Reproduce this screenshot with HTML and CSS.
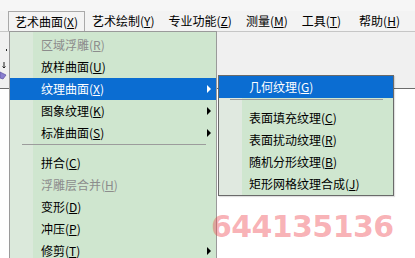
FILE: index.html
```html
<!DOCTYPE html>
<html>
<head>
<meta charset="utf-8">
<link rel="stylesheet" href="styles.css">
</head>
<body>
<div class="app">
  <div class="titlegap"></div>
  <div class="menubar">
    <div class="mb-item pressed">艺术曲面(<u>X</u>)</div>
    <div class="mb-item">艺术绘制(<u>Y</u>)</div>
    <div class="mb-item">专业功能(<u>Z</u>)</div>
    <div class="mb-item">测量(<u>M</u>)</div>
    <div class="mb-item">工具(<u>T</u>)</div>
    <div class="mb-item">帮助(<u>H</u>)</div>
  </div>
  <div class="toolbar">
    <svg class="tb-icons" width="8" height="56" viewBox="0 0 8 56">
      <rect x="6" y="17" width="1" height="2" fill="#222"/>
      <path d="M4 30 L4 36 M2.5 34.5 L4 36 L5.5 34.5" stroke="#222" stroke-width="1" fill="none"/>
      <path d="M0 40 L6 43 L3 47 L0 46 Z" fill="#8a7fd0" stroke="#5a4fa0" stroke-width="0.7"/>
    </svg>
  </div>
  <div class="canvas"></div>

  <div class="menu main-menu">
    <div class="row disabled">区域浮雕(<u>R</u>)</div>
    <div class="row">放样曲面(<u>U</u>)</div>
    <div class="row active sub">纹理曲面(<u>X</u>)</div>
    <div class="row sub">图象纹理(<u>K</u>)</div>
    <div class="row sub">标准曲面(<u>S</u>)</div>
    <div class="sep"></div>
    <div class="row">拼合(<u>C</u>)</div>
    <div class="row disabled">浮雕层合并(<u>H</u>)</div>
    <div class="row">变形(<u>D</u>)</div>
    <div class="row">冲压(<u>P</u>)</div>
    <div class="row sub">修剪(<u>T</u>)</div>
  </div>

  <div class="menu sub-menu">
    <div class="row active">几何纹理(<u>G</u>)</div>
    <div class="sep"></div>
    <div class="row">表面填充纹理(<u>C</u>)</div>
    <div class="row">表面扰动纹理(<u>R</u>)</div>
    <div class="row">随机分形纹理(<u>B</u>)</div>
    <div class="row">矩形网格纹理合成(<u>J</u>)</div>
  </div>

  <div class="watermark">644135136</div>
</div>
</body>
</html>
```
FILE: styles.css
```css
html, body {
  margin: 0;
  padding: 0;
}
body {
  width: 415px;
  height: 258px;
  overflow: hidden;
  background: #ffffff;
  font-family: "Noto Sans CJK SC", "Noto Sans", sans-serif;
  font-size: 12px;
  color: #000;
}
.app {
  position: relative;
  width: 415px;
  height: 258px;
  display: flex;
  flex-direction: column;
}
u {
  text-decoration: underline;
  text-underline-offset: 1px;
}
.titlegap {
  height: 11px;
  background: #f6f6f6;
}
.menubar {
  display: flex;
  height: 20px;
  padding-left: 8px;
  background: #f3f3f3;
  border-bottom: 1px solid #c6c6c6;
}
.mb-item {
  padding: 0 7px;
  line-height: 20px;
  white-space: nowrap;
}
.mb-item:last-child {
  padding-left: 11px;
}
.mb-item.pressed {
  border: 1px solid #a9a9a9;
  border-bottom: none;
  padding: 0 6px;
  line-height: 19px;
}
.toolbar {
  height: 56px;
  background: #f0f0f0;
  border-bottom: 1px solid #6c6c6c;
  display: flex;
}
.tb-icons {
  display: block;
}
.canvas {
  flex: 1;
  background: #ffffff;
}
.menu {
  position: absolute;
  background: #cfe6cf;
  box-sizing: border-box;
}
.main-menu {
  left: 9px;
  top: 31px;
  width: 208px;
  padding: 2px 0;
  border: 1px solid #9a9a9a;
  background: linear-gradient(to right, #dbe9db 0, #dbe9db 23px, #cfe6cf 23px);
}
.sub-menu {
  left: 218px;
  top: 75px;
  width: 176px;
  border: 1px solid #6a6a6a;
  background: linear-gradient(to right, #e0e9e0 0, #e0e9e0 23px, #cfe6cf 23px);
  box-shadow: 1px 1px 1px rgba(0,0,0,0.12);
}
.row {
  position: relative;
  height: 22px;
  line-height: 22px;
  white-space: nowrap;
}
.main-menu .row {
  padding-left: 31px;
}
.sub-menu .row {
  padding-left: 30px;
}
.row.disabled {
  color: #8c8c8c;
}
.row.active {
  background: #0b6dd2;
  color: #ffffff;
}
.row.sub::after {
  content: "";
  position: absolute;
  right: 5px;
  top: 7px;
  border-left: 4px solid #000;
  border-top: 4px solid transparent;
  border-bottom: 4px solid transparent;
}
.row.active.sub::after {
  border-left-color: #ffffff;
}
.sep {
  height: 8px;
  box-sizing: border-box;
}
.sep::before {
  content: "";
  display: block;
  height: 1px;
  background: #9c9c9c;
}
.main-menu .sep {
  margin: 0 10px 0 12px;
}
.sub-menu .sep {
  margin: 0 10px 0 11px;
}
.sub-menu .sep::before {
  margin-top: 1px;
}
.watermark {
  position: absolute;
  left: 211px;
  top: 209px;
  font-family: "DejaVu Sans", sans-serif;
  font-weight: bold;
  font-size: 30px;
  line-height: 36px;
  letter-spacing: -0.6px;
  color: rgba(240, 70, 80, 0.42);
}
```
